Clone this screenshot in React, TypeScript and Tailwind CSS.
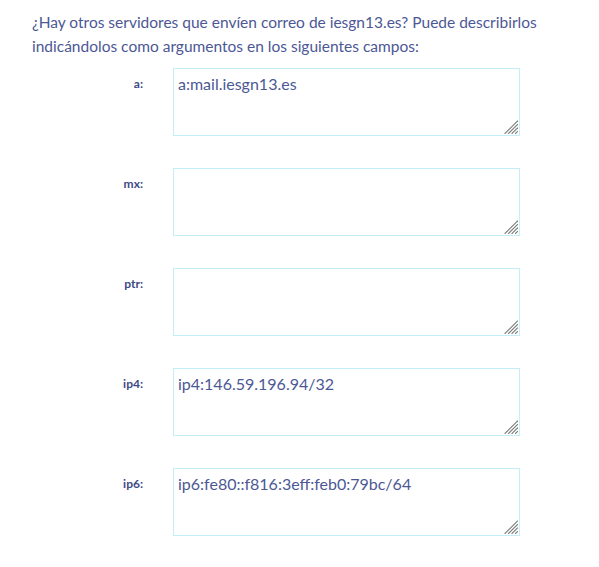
const fields = [
  { name: 'a', value: 'a:mail.iesgn13.es' },
  { name: 'mx', value: '' },
  { name: 'ptr', value: '' },
  { name: 'ip4', value: 'ip4:146.59.196.94/32' },
  { name: 'ip6', value: 'ip6:fe80::f816:3eff:feb0:79bc/64' },
];

function ResizeGrip() {
  return (
    <svg
      className="absolute right-[2px] bottom-[2px] pointer-events-none"
      width="14"
      height="14"
      viewBox="0 0 14 14"
    >
      <g stroke="#7a7a7a" strokeWidth="1.1" strokeLinecap="square">
        <line x1="1" y1="13.5" x2="13.5" y2="1" />
        <line x1="4.5" y1="13.5" x2="13.5" y2="4.5" />
        <line x1="8" y1="13.5" x2="13.5" y2="8" />
        <line x1="11.5" y1="13.5" x2="13.5" y2="11.5" />
      </g>
    </svg>
  );
}

export default function App() {
  return (
    <div className="bg-white min-h-[567px] pl-8 pr-6 pt-[10px] text-[#4c5894] font-['Lato',sans-serif]">
      <p className="text-[15.5px] leading-[24px]">
        ¿Hay otros servidores que envíen correo de iesgn13.es? Puede describirlos indicándolos como argumentos en los siguientes campos:
      </p>
      <div className="mt-[10px]">
        {fields.map((f) => (
          <div key={f.name} className="flex mb-8">
            <label className="w-[111px] text-right pt-[7px] text-[12px] font-bold text-[#3d4a85]">
              {f.name}:
            </label>
            <div className="relative ml-[30px] w-[347px] h-[68px]">
              <textarea
                defaultValue={f.value}
                className="block w-full h-full resize-none border border-[#c3eef8] px-[4px] py-[5px] text-[16px] leading-[20px] text-[#4c5894] outline-none"
              />
              <ResizeGrip />
            </div>
          </div>
        ))}
      </div>
    </div>
  );
}
